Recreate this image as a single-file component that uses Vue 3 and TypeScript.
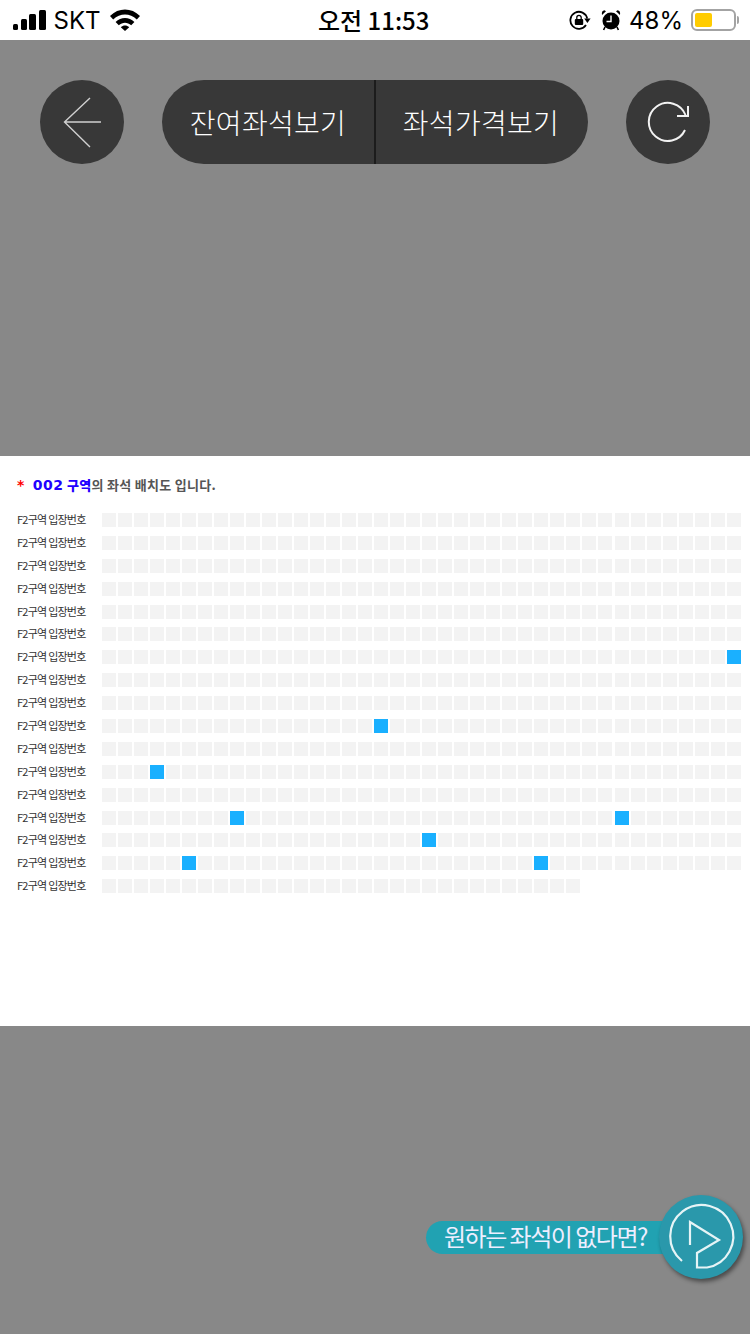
<script setup lang="ts">
const rowCount = 17
const colCount = 40
const lastRowCols = 30

// seats still open, row index -> column indexes
const openSeats: Record<number, number[]> = {
  6: [39],
  9: [17],
  11: [3],
  13: [8, 32],
  14: [20],
  15: [5, 27]
}

const rows = Array.from({ length: rowCount }, (_, r) => {
  const count = r === rowCount - 1 ? lastRowCols : colCount
  return Array.from({ length: count }, (_, c) => (openSeats[r] || []).includes(c))
})
</script>

<template>
  <div class="page">
    <div class="status">
      <div class="status-left">
        <div class="signal">
          <i class="b1"></i><i class="b2"></i><i class="b3"></i><i class="b4"></i>
        </div>
        <span class="carrier">SKT</span>
        <svg class="wifi" width="30" height="22" viewBox="0 0 30 22">
          <path d="M0 7C8.5 -1.6 21.5 -1.6 30 7L26.8 10.4C20 4 10 4 3.2 10.4Z" fill="#000" />
          <path d="M5.6 13C11 7.8 19 7.8 24.4 13L21.2 16.2C17.5 12.8 12.5 12.8 8.8 16.2Z" fill="#000" />
          <path d="M10.8 18.2C13.2 15.8 16.8 15.8 19.2 18.2L15 22Z" fill="#000" />
        </svg>
      </div>
      <div class="clock">오전 11:53</div>
      <div class="status-right">
        <svg class="lock" width="22" height="22" viewBox="0 0 22 22">
          <path d="M18.2 9.5A8.5 8.5 0 1 0 17 16" fill="none" stroke="#000" stroke-width="1.8" />
          <path d="M15.2 9.5H21.6L18.4 14Z" fill="#000" />
          <rect x="5.8" y="10" width="8.4" height="6" rx="1" fill="#000" />
          <path d="M7.8 10.5V8.6a2.2 2.2 0 0 1 4.4 0V10.5" fill="none" stroke="#000" stroke-width="1.3" />
        </svg>
        <svg class="alarm" width="20" height="22" viewBox="0 0 20 22">
          <circle cx="10" cy="12" r="8.5" fill="#000" />
          <path d="M10 6.5V12.5H5.5" fill="none" stroke="#fff" stroke-width="1.4" />
          <path d="M1 6L5 2.2L3.4 1.2C1.6 1.4 0.4 3 1 6ZM19 6L15 2.2L16.6 1.2C18.4 1.4 19.6 3 19 6Z" fill="#000" />
          <path d="M4 18L2.6 21M16 18L17.4 21" stroke="#000" stroke-width="1.6" />
        </svg>
        <span class="percent">48%</span>
        <div class="battery">
          <div class="battery-level"></div>
        </div>
        <div class="battery-cap"></div>
      </div>
    </div>

    <div class="top">
      <div class="nav">
        <button class="round">
          <svg width="40" height="52" viewBox="0 0 40 52">
            <path d="M28 2L2.5 26L28 51M2.5 26H39" fill="none" stroke="#d0d0d0" stroke-width="1.4" />
          </svg>
        </button>
        <div class="pill">
          <div class="pill-item">잔여좌석보기</div>
          <div class="pill-item">좌석가격보기</div>
        </div>
        <button class="round">
          <svg width="42" height="42" viewBox="0 0 42 42">
            <path d="M38 29A19 19 0 1 1 38.5 14" fill="none" stroke="#f2f2f2" stroke-width="2" />
            <path d="M41 5V15H30" fill="none" stroke="#f2f2f2" stroke-width="2" />
          </svg>
        </button>
      </div>
    </div>

    <div class="panel">
      <p class="notice">
        <span class="star">*</span>
        <b class="area"><span class="num">002</span> 구역</b>의 좌석 배치도 입니다.
      </p>
      <div class="map">
        <div v-for="(row, r) in rows" :key="r" class="seat-row">
          <span class="seat-label">F2구역 입장번호</span>
          <div class="seats">
            <span v-for="(open, c) in row" :key="c" class="seat" :class="{ open }"></span>
          </div>
        </div>
      </div>
    </div>

    <div class="bottom">
      <div class="promo">
        <div class="promo-text">원하는 좌석이 없다면?</div>
        <div class="promo-btn">
          <svg width="84" height="84" viewBox="0 0 84 84">
            <path d="M23 66A31.5 31.5 0 1 1 48 72.5H38V58L60 45L31 27V50" fill="none" stroke="#e6f4f6" stroke-width="2.2" />
          </svg>
        </div>
      </div>
    </div>
  </div>
</template>

<style>
html,
body {
  margin: 0;
  background: #888;
}
</style>

<style scoped>
.page {
  width: 750px;
  height: 1334px;
  display: flex;
  flex-direction: column;
  background: #888;
  font-family: "Noto Sans CJK KR", "Liberation Sans", sans-serif;
}

.status {
  height: 40px;
  background: #fff;
  display: flex;
  align-items: center;
  justify-content: space-between;
  padding: 0 11px 0 13px;
  box-sizing: border-box;
  position: relative;
  color: #000;
}

.status-left,
.status-right {
  display: flex;
  align-items: center;
}

.signal {
  display: flex;
  align-items: flex-end;
  gap: 2.5px;
  height: 20px;
}

.signal i {
  display: block;
  background: #000;
  border-radius: 1.5px;
}

.signal .b1 { width: 5px; height: 6px; }
.signal .b2 { width: 6px; height: 11px; }
.signal .b3 { width: 7px; height: 16px; }
.signal .b4 { width: 7px; height: 20px; }

.carrier {
  margin-left: 8px;
  font-family: "Inter", "Liberation Sans", sans-serif;
  font-size: 24px;
  width: 48px;
}

.wifi {
  margin-left: 8px;
}

.clock {
  position: absolute;
  left: 318px;
  top: 0;
  line-height: 40px;
  font-size: 24px;
  font-weight: 500;
}

.lock {
  margin-right: 10px;
}

.percent {
  margin-left: 8px;
  font-family: "Inter", "Liberation Sans", sans-serif;
  font-size: 24px;
}

.battery {
  margin-left: 8px;
  width: 45px;
  height: 22px;
  box-sizing: border-box;
  border: 2px solid #a3a3a3;
  border-radius: 6px;
  padding: 2px;
}

.battery-level {
  width: 17px;
  height: 14px;
  background: #fc0;
  border-radius: 2px;
}

.battery-cap {
  width: 2px;
  height: 8px;
  margin-left: 1px;
  background: #a3a3a3;
  border-radius: 0 2px 2px 0;
}

.top {
  height: 416px;
  box-sizing: border-box;
  padding: 40px 40px 0;
}

.nav {
  display: flex;
  justify-content: space-between;
  align-items: center;
}

.round {
  width: 84px;
  height: 84px;
  padding: 0;
  border: 0;
  border-radius: 50%;
  background: #383838;
  display: flex;
  align-items: center;
  justify-content: center;
}

.pill {
  width: 426px;
  height: 84px;
  border-radius: 42px;
  background: #383838;
  display: flex;
  overflow: hidden;
}

.pill-item {
  flex: 0 0 212px;
  box-sizing: border-box;
  display: flex;
  align-items: center;
  justify-content: center;
  color: #fff;
  font-size: 28px;
  font-weight: 300;
  letter-spacing: 0.3px;
}

.pill-item + .pill-item {
  flex: 1;
  border-left: 2px solid #1c1c1c;
  padding-right: 2px;
}

.panel {
  height: 570px;
  background: #fff;
  box-sizing: border-box;
  padding: 19px 9px 0 17px;
}

.notice {
  margin: 0;
  height: 20px;
  line-height: 20px;
  font-size: 13px;
  font-weight: 700;
  color: #555;
  letter-spacing: 0.3px;
}

.star {
  color: #f00;
  margin-right: 8px;
  font-family: "DejaVu Sans", sans-serif;
  font-size: 14px;
}

.area {
  color: #2200ff;
}

.num {
  font-family: "DejaVu Sans", sans-serif;
  font-size: 14px;
  letter-spacing: 0.6px;
}

.map {
  margin-top: 17px;
}

.seat-row {
  height: 22.9px;
  display: flex;
  align-items: flex-start;
}

.seat-label {
  width: 85px;
  line-height: 14px;
  font-size: 11px;
  letter-spacing: -0.75px;
  color: #333;
  white-space: nowrap;
}

.seats {
  display: flex;
  gap: 2.02px;
  margin-top: 1px;
}

.seat {
  width: 14px;
  height: 14px;
  background: #f3f3f3;
}

.seat.open {
  background: #1ab0ff;
}

.bottom {
  flex: 1;
  position: relative;
}

.promo {
  position: absolute;
  left: 426px;
  top: 169px;
  width: 317px;
  height: 84px;
  display: flex;
  align-items: center;
}

.promo-text {
  width: 260px;
  height: 33px;
  box-sizing: border-box;
  padding-left: 18px;
  border-radius: 17px 0 0 17px;
  background: #21a2b2;
  color: #eef;
  font-size: 24px;
  line-height: 30px;
  letter-spacing: -1.5px;
  white-space: nowrap;
}

.promo-btn {
  position: absolute;
  right: 0;
  top: 0;
  width: 84px;
  height: 84px;
  border-radius: 50%;
  background: #2a98ab;
  box-shadow: 2px 3px 4px rgba(0, 0, 0, 0.45);
}
</style>
